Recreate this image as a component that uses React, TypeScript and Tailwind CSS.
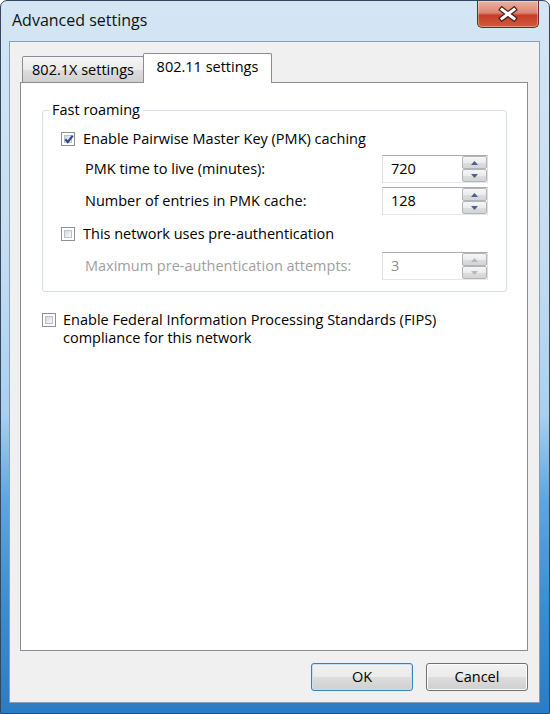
import React from "react";

function Check({ checked }: { checked?: boolean }) {
  return (
    <span className="relative flex w-[14px] h-[14px] shrink-0 border border-[#8e8f8f] bg-white p-[2px]">
      <span className="flex-1 border border-[#bcc2c9] bg-[linear-gradient(135deg,#d2d6dc_0%,#eef0f2_70%,#f8f8f9_100%)]" />
      {checked && (
        <svg className="absolute left-[1px] top-[0px]" width="12" height="12" viewBox="0 0 12 12">
          <path d="M2.3 6.2 L4.8 9 L9.8 2.6" fill="none" stroke="#2a4b93" strokeWidth="2.2" strokeLinejoin="miter" />
        </svg>
      )}
    </span>
  );
}

function Arrow({ up, disabled }: { up?: boolean; disabled?: boolean }) {
  return (
    <span className="flex-1 flex items-center justify-center border border-[#b1b5ba] rounded-[2px] bg-[linear-gradient(180deg,#f6f6f6_0%,#ececec_50%,#dedede_51%,#d4d4d4_100%)]">
      <svg width="7" height="4" viewBox="0 0 7 4">
        {up ? (
          <polygon points="0,4 7,4 3.5,0" fill={disabled ? "#b9b9b9" : "#4b5f8e"} />
        ) : (
          <polygon points="0,0 7,0 3.5,4" fill={disabled ? "#b9b9b9" : "#4b5f8e"} />
        )}
      </svg>
    </span>
  );
}

function Spin({ value, disabled }: { value: string; disabled?: boolean }) {
  return (
    <div className="flex w-[106px] h-[28px] border border-[#abadb3] border-x-[#dbdfe6] border-b-[#e3e9ef] bg-white">
      <div className={disabled ? "flex-1 flex items-center pl-[8px] text-[#8d8d8d]" : "flex-1 flex items-center pl-[8px] text-black"}>
        {value}
      </div>
      <div className="flex flex-col w-[25px]">
        <Arrow up disabled={disabled} />
        <Arrow disabled={disabled} />
      </div>
    </div>
  );
}

export default function App() {
  return (
    <div className="w-[550px] h-[714px] flex flex-col overflow-hidden rounded-t-[7px] border border-[#33485f] bg-[linear-gradient(180deg,#d4e6f4_0%,#c6ddf1_35%,#a9d0ef_58%,#5ea6df_70%,#3b8dd2_85%,#2c7cc3_100%)] font-['Open_Sans',sans-serif] text-[14.5px] text-black">
      {/* title bar */}
      <div className="h-[40px] shrink-0 flex items-start justify-between">
        <div className="pl-[11px] pt-[8px] text-[16px] leading-[22px] text-[#111]">Advanced settings</div>
        <div className="mr-[10px] w-[62px] h-[27px] flex items-center justify-center rounded-b-[5px] border border-t-0 border-[#6b2a1f] bg-[linear-gradient(180deg,#eab3a6_0%,#dd8572_45%,#c63e27_55%,#cf5a3f_100%)] shadow-[inset_0_0_0_1px_rgba(255,255,255,0.35)]">
          <svg width="22" height="16" viewBox="0 0 22 16">
            <path d="M5 3.5 L17 12.5 M17 3.5 L5 12.5" stroke="#4d2119" strokeWidth="5.4" strokeLinecap="square" />
            <path d="M5 3.5 L17 12.5 M17 3.5 L5 12.5" stroke="#ffffff" strokeWidth="3" strokeLinecap="square" />
          </svg>
        </div>
      </div>

      {/* client area */}
      <div className="flex-1 ml-[8px] mr-[9px] mb-[10px] flex flex-col border border-[#8a9fb6] bg-[#f0f0f0] pl-[10px] pr-[11px] pt-[11px] pb-[11px]">
        {/* tabs */}
        <div className="relative z-10 flex items-end h-[30px] -mb-[1px] pl-[2px]">
          <div className="mb-[1px] w-[122px] h-[26px] flex items-center justify-center rounded-t-[2px] border border-b-0 border-[#898c95] bg-[linear-gradient(180deg,#f5f5f5_0%,#ebebeb_50%,#dddddd_51%,#cfcfcf_100%)]">
            802.1X settings
          </div>
          <div className="-ml-[1px] w-[129px] h-[30px] flex items-center justify-center pb-[3px] rounded-t-[2px] border border-b-0 border-[#898c95] bg-white">
            802.11 settings
          </div>
        </div>

        {/* panel */}
        <div className="flex-1 flex flex-col border border-[#898c95] bg-white pl-[21px] pr-[20px] pt-[17px]">
          <fieldset className="border border-[#d5dfe5] rounded-[3px] pl-[18px] pr-[18px] pb-[11px]">
            <legend className="-ml-[12px] px-[3px] leading-[20px]">Fast roaming</legend>
            <div className="pt-[7px] flex flex-col">
              <div className="h-[24px] flex items-center gap-[8px]">
                <Check checked />
                <span>Enable Pairwise Master Key (PMK) caching</span>
              </div>
              <div className="mt-[4px] h-[28px] flex items-center justify-between pl-[24px]">
                <span>PMK time to live (minutes):</span>
                <Spin value="720" />
              </div>
              <div className="mt-[4px] h-[28px] flex items-center justify-between pl-[24px]">
                <span>Number of entries in PMK cache:</span>
                <Spin value="128" />
              </div>
              <div className="mt-[7px] h-[24px] flex items-center gap-[8px]">
                <Check />
                <span>This network uses pre-authentication</span>
              </div>
              <div className="mt-[6px] h-[28px] flex items-center justify-between pl-[24px]">
                <span className="text-[#a0a0a0]">Maximum pre-authentication attempts:</span>
                <Spin value="3" disabled />
              </div>
            </div>
          </fieldset>

          <div className="mt-[19px] flex items-start gap-[7px]">
            <span className="mt-[2px] flex">
              <Check />
            </span>
            <span className="leading-[18px]">
              Enable Federal Information Processing Standards (FIPS)
              <br />
              compliance for this network
            </span>
          </div>
        </div>

        {/* buttons */}
        <div className="pt-[12px] flex justify-end gap-[13px]">
          <button className="w-[102px] h-[28px] rounded-[3px] border border-[#3c7fb1] bg-[linear-gradient(180deg,#f2f2f2_0%,#ebebeb_50%,#dddddd_51%,#cfcfcf_100%)] shadow-[inset_0_0_0_1px_#bfe3f7] text-[14.5px]">
            OK
          </button>
          <button className="w-[102px] h-[28px] rounded-[3px] border border-[#707070] bg-[linear-gradient(180deg,#f2f2f2_0%,#ebebeb_50%,#dddddd_51%,#cfcfcf_100%)] shadow-[inset_0_0_0_1px_#fcfcfc] text-[14.5px]">
            Cancel
          </button>
        </div>
      </div>
    </div>
  );
}
